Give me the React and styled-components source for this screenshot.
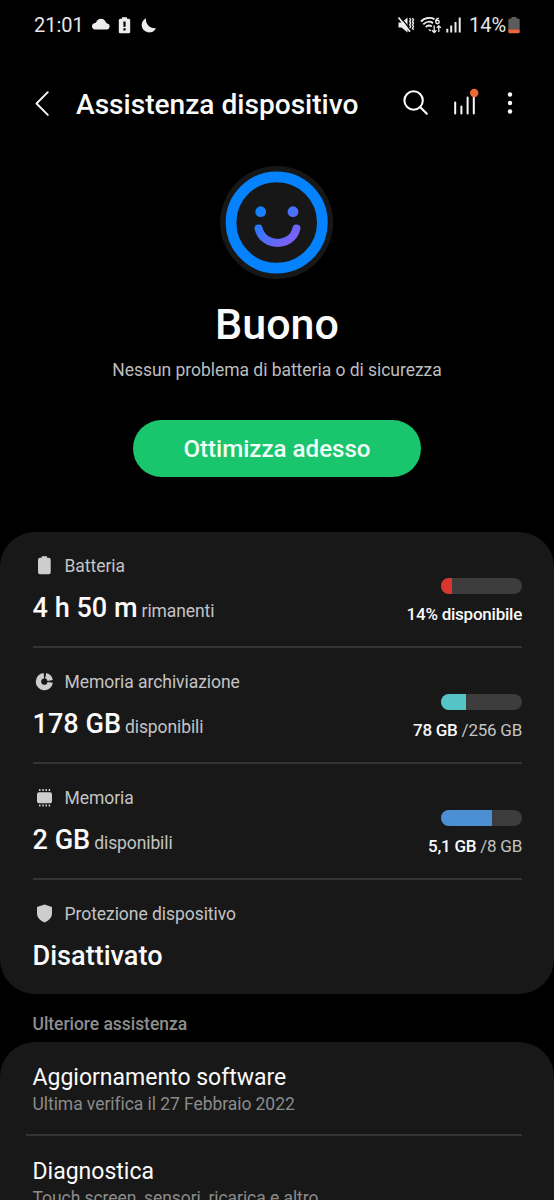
import React from 'react';
import styled, { createGlobalStyle } from 'styled-components';

const GlobalStyle = createGlobalStyle`
    * {
        box-sizing: border-box;
    }
    body {
        margin: 0;
        background: #000;
        font-family: Roboto, "Noto Sans", sans-serif;
        color: #fafafa;
    }
`;

const Screen = styled.div`
    display: flex;
    flex-direction: column;
    width: 554px;
    height: 1200px;
    overflow: hidden;
    background: #000;
`;

const StatusBar = styled.div`
    display: flex;
    justify-content: space-between;
    align-items: center;
    flex: none;
    height: 49px;
    padding: 0 34px 0 34px;
    font-size: 20px;
    color: #e6e6e6;
`;

const StatusGroup = styled.div`
    display: flex;
    align-items: center;

    svg {
        display: block;
    }
`;

const Clock = styled.span`
    width: 57px;
`;

const Percent = styled.span`
    width: 39px;
    margin-left: 6px;
`;

const Header = styled.header`
    display: flex;
    align-items: center;
    flex: none;
    height: 56px;
    margin-top: 27px;
    padding: 0 40px 0 32px;
`;

const IconButton = styled.button`
    display: flex;
    align-items: center;
    justify-content: center;
    width: ${props => props.width}px;
    height: 40px;
    margin-left: ${props => props.gap || 0}px;
    padding: 0;
    border: 0;
    background: none;
`;

const Title = styled.h1`
    flex: 1;
    margin: 1px 0 0 24px;
    font-size: 28.1px;
    font-weight: 500;
    line-height: 36px;
    white-space: nowrap;
`;

const Hero = styled.section`
    display: flex;
    flex-direction: column;
    align-items: center;
    flex: none;
    height: 400px;
    padding-top: 34px;

    svg {
        display: block;
    }
`;

const Status = styled.h2`
    margin: 18px 0 0;
    font-size: 43px;
    font-weight: 500;
    line-height: 52px;
`;

const Subtitle = styled.p`
    margin: 8px 0 0;
    font-size: 17.5px;
    letter-spacing: -0.04px;
    line-height: 24px;
    color: #bdbdbd;
`;

const OptimizeButton = styled.button`
    width: 288px;
    height: 56.5px;
    margin-top: 38px;
    padding: 1px 0 0;
    border: 0;
    border-radius: 29px;
    background: #19c56d;
    color: #f1fff7;
    font-family: inherit;
    font-size: 24.1px;
    font-weight: 500;
`;

const Card = styled.section`
    flex: none;
    padding: 0 32px 0 32.5px;
    border-radius: ${props => props.open ? "35px 35px 0 0" : "35px"};
    background: #181818;
`;

const Row = styled.div`
    display: flex;
    justify-content: space-between;
    height: ${props => props.last ? "113.5px" : "116px"};
    padding-top: 22px;
    border-bottom: ${props => props.last ? "0" : "2px solid #333"};
`;

const Label = styled.div`
    display: flex;
    align-items: center;
    gap: 9px;
    font-size: 17.5px;
    letter-spacing: -0.05px;
    line-height: 24px;
    color: #c4c4c4;
`;

const Value = styled.div`
    margin-top: 12px;
    font-size: 27.1px;
    font-weight: 500;
    line-height: 36px;
    white-space: nowrap;
`;

const Unit = styled.span`
    margin-left: 4px;
    font-size: 17.5px;
    font-weight: 400;
    letter-spacing: -0.1px;
    color: #c4c4c4;
`;

const Usage = styled.div`
    display: flex;
    flex-direction: column;
    align-items: flex-end;
    padding-top: 24px;
`;

const Track = styled.div`
    width: 81px;
    height: 16px;
    border-radius: 8px;
    overflow: hidden;
    background: #3c3c3c;
`;

const Fill = styled.div`
    height: 100%;
    background: ${props => props.color};
`;

const Amount = styled.div`
    margin-top: 8px;
    font-size: 17px;
    letter-spacing: -0.24px;
    line-height: 24px;
    color: #c4c4c4;
    white-space: nowrap;

    b {
        font-weight: 500;
        color: #fafafa;
    }
`;

const SectionLabel = styled.h3`
    flex: none;
    margin: 0;
    padding: 18px 32.5px 6.5px;
    font-size: 17.5px;
    font-weight: 500;
    letter-spacing: -0.05px;
    line-height: 24px;
    color: #8e8e8e;
`;

const ListItem = styled.div`
    padding-top: 22px;
    height: 92px;
`;

const ItemTitle = styled.div`
    font-size: 23px;
    line-height: 28px;
`;

const ItemText = styled.div`
    font-size: 17.5px;
    letter-spacing: -0.06px;
    line-height: 24px;
    color: #8b8b8b;
`;

const Divider = styled.div`
    height: 2px;
    margin-left: -6.5px;
    background: #333;
`;

const StatusIcons = () => (
    <svg width="66" height="20" viewBox="0 0 66 20" fill="#ececec">
        <path d="M4 14.500a3.200 3.200 0 0 1-.6-6.300c.8-.1 1.500-.3 2-1.400a5 5 0 0 1 9.200 0c.3.900.8 1.500 1.800 1.800a3 3 0 0 1-.5 5.900z" />
        <path fillRule="evenodd" d="M31 2.300h5v1.500h1.700a1.500 1.500 0 0 1 1.500 1.500v11.400a1.500 1.500 0 0 1-1.500 1.500h-8.400a1.500 1.500 0 0 1-1.500-1.500V5.300a1.500 1.500 0 0 1 1.500-1.500H31zM32.400 6.500v5.300h2.200V6.500zM32.400 13.300v2.200h2.200v-2.200z" />
        <path d="M55 3.200A7.500 7.500 0 1 0 65 13.200A8.800 8.800 0 0 1 55 3.200z" />
    </svg>
);

const SignalIcons = () => (
    <svg width="66" height="20" viewBox="0 0 66 20" fill="none" stroke="#ececec">
        <path d="M1.500 7.500h3l6-5v15l-6-5h-3z" fill="#ececec" stroke="none" />
        <path d="M3.200 1.800l11 13.500" stroke="#000" strokeWidth="1.300" />
        <path d="M1.500 2.500l11.500 14.200" strokeWidth="1.800" />
        <path d="M12.700 3l1 1.700-1 1.700 1 1.700-1 1.700 1 1.700-1 1.700M15.500 3l1 1.700-1 1.700 1 1.700-1 1.700 1 1.700-1 1.700 1 1.700" strokeWidth="1.400" />
        <path d="M24 6.500c3.500-4 9.500-4.500 13.500-2.300M26.300 9.400c2.800-3 6.700-3.400 9.700-1.300M28.800 12c1.800-1.800 4-2 6-.4" strokeWidth="1.900" />
        <path d="M31 14l2 2.500 1.500-1.500z" fill="#ececec" stroke="none" />
        <path d="M41.800 3.200c-2 .2-3 1.500-3 3.300" strokeWidth="1.400" />
        <circle cx="40.500" cy="7" r="1.700" strokeWidth="1.400" />
        <path d="M37.200 10.500v7M35 15.300l2.200 2.200 2.200-2.200M41.800 17v-6M39.800 12.800l2-2 2 2" strokeWidth="1.300" />
        <path d="M50.300 13.800v3.700M54.200 10.500v7M58.500 7v10.500M62.700 2.500v15" strokeWidth="2" />
    </svg>
);

const LowBattery = () => (
    <svg width="12" height="18" viewBox="0 0 12 18">
        <path d="M3.500 1h5v1.500h1.700a1.500 1.500 0 0 1 1.500 1.500v9H.3V4a1.500 1.500 0 0 1 1.500-1.500h1.700z" fill="#5b5b5b" />
        <path d="M.3 13.300h11.400v2.400a1.500 1.500 0 0 1-1.500 1.500H1.800a1.500 1.500 0 0 1-1.500-1.500z" fill="#e96842" />
    </svg>
);

const BackIcon = () => (
    <svg width="20" height="28" viewBox="0 0 20 28" fill="none" stroke="#fafafa" strokeWidth="1.900" strokeLinecap="round" strokeLinejoin="round">
        <path d="M15.800 2.200L4.500 13.500L15.800 24.800" />
    </svg>
);

const SearchIcon = () => (
    <svg width="28" height="28" viewBox="0 0 28 28" fill="none" stroke="#fafafa" strokeWidth="2.100" strokeLinecap="round">
        <circle cx="11.600" cy="10.500" r="9.200" />
        <path d="M18.300 17.200l6.500 6.500" />
    </svg>
);

const ChartIcon = () => (
    <svg width="28" height="32" viewBox="0 0 28 32" stroke="#fafafa" strokeWidth="2" strokeLinecap="round">
        <path d="M3.200 14.500v11M9.400 18.500v7M15.600 9.500v16M21.800 8v17.500" />
        <circle cx="22.200" cy="5" r="4.200" fill="#ef6a2f" stroke="none" />
    </svg>
);

const MoreIcon = () => (
    <svg width="8" height="28" viewBox="0 0 8 28" fill="#fafafa">
        <circle cx="4" cy="4.500" r="2.200" />
        <circle cx="4" cy="13" r="2.200" />
        <circle cx="4" cy="21.500" r="2.200" />
    </svg>
);

const Smiley = () => (
    <svg width="114" height="114" viewBox="0 0 114 114" fill="none">
        <defs>
            <linearGradient id="face" gradientUnits="userSpaceOnUse" x1="38" y1="42" x2="74" y2="80">
                <stop offset="0" stopColor="#0a84ff" />
                <stop offset="1" stopColor="#8a5cf8" />
            </linearGradient>
        </defs>
        <circle cx="56.700" cy="56.500" r="56.500" fill="#171717" />
        <circle cx="56.700" cy="56.500" r="45.700" stroke="#0583ff" strokeWidth="10.700" />
        <circle cx="40.700" cy="45.700" r="5.400" fill="url(#face)" />
        <circle cx="73" cy="45.700" r="5.400" fill="url(#face)" />
        <path d="M38.600 62.500C43 81.700 72.200 81.700 76.400 62.500" stroke="url(#face)" strokeWidth="8" strokeLinecap="round" />
    </svg>
);

const BatteryIcon = () => (
    <svg width="23" height="24" viewBox="0 0 23 24" fill="#cdcdcd">
        <path d="M8.700 2.300h5.300v1.400h1.700a2 2 0 0 1 2 2v12.600a2 2 0 0 1-2 2H7a2 2 0 0 1-2-2V5.700a2 2 0 0 1 2-2h1.700z" />
    </svg>
);

const StorageIcon = () => (
    <svg width="23" height="24" viewBox="0 0 23 24" fill="none" stroke="#cdcdcd" strokeWidth="5.400">
        <path d="M12.700 5.700a5.900 5.900 0 0 1 4.500 4.800M17.200 12.300a5.900 5.900 0 1 1-6.300-6.600" />
    </svg>
);

const MemoryIcon = () => (
    <svg width="23" height="24" viewBox="0 0 23 24" fill="#cdcdcd" stroke="#cdcdcd">
        <rect x="4" y="6.300" width="15" height="11" rx="2" stroke="none" />
        <path d="M6.800 3v2M10 3v2M13.200 3v2M16.400 3v2M6.800 18.500v2M10 18.500v2M13.200 18.500v2M16.400 18.500v2" strokeWidth="1.500" />
    </svg>
);

const ShieldIcon = () => (
    <svg width="23" height="24" viewBox="0 0 23 24" fill="#cdcdcd">
        <path d="M11.500 2.500l7.500 2.400v6.600c0 4.200-3.500 7.200-7.500 9-4-1.800-7.500-4.800-7.500-9V4.900z" />
    </svg>
);

const stats = [
    { icon: <BatteryIcon />, label: "Batteria", value: "4 h 50 m", unit: "rimanenti", color: "#dc352d", percent: 14, amount: "14% disponibile" },
    { icon: <StorageIcon />, label: "Memoria archiviazione", value: "178 GB", unit: "disponibili", color: "#55c4c6", percent: 31, amount: "78 GB", total: " /256 GB" },
    { icon: <MemoryIcon />, label: "Memoria", value: "2 GB", unit: "disponibili", color: "#4b8fd5", percent: 63, amount: "5,1 GB", total: " /8 GB" },
    { icon: <ShieldIcon />, label: "Protezione dispositivo", value: "Disattivato" },
];

const StatRow = ({ item, last }) => {
    return <Row last={last ? 1 : undefined}>
        <div>
            <Label>{item.icon}{item.label}</Label>
            <Value>{item.value}{item.unit && <Unit>{item.unit}</Unit>}</Value>
        </div>
        {item.amount && <Usage>
            <Track>
                <Fill color={item.color} style={{ width: `${item.percent}%` }} />
            </Track>
            <Amount><b>{item.amount}</b>{item.total}</Amount>
        </Usage>}
    </Row>
}

const App = () => {
    return <>
        <GlobalStyle />
        <Screen>
            <StatusBar>
                <StatusGroup>
                    <Clock>21:01</Clock>
                    <StatusIcons />
                </StatusGroup>
                <StatusGroup>
                    <SignalIcons />
                    <Percent>14%</Percent>
                    <LowBattery />
                </StatusGroup>
            </StatusBar>
            <Header>
                <IconButton width={20} aria-label="Indietro"><BackIcon /></IconButton>
                <Title>Assistenza dispositivo</Title>
                <IconButton width={28} aria-label="Cerca"><SearchIcon /></IconButton>
                <IconButton width={28} gap={22} aria-label="Grafico"><ChartIcon /></IconButton>
                <IconButton width={8} gap={26} aria-label="Altro"><MoreIcon /></IconButton>
            </Header>
            <Hero>
                <Smiley />
                <Status>Buono</Status>
                <Subtitle>Nessun problema di batteria o di sicurezza</Subtitle>
                <OptimizeButton>Ottimizza adesso</OptimizeButton>
            </Hero>
            <Card>
                {stats.map((item, i) => <StatRow key={item.label} item={item} last={i === stats.length - 1} />)}
            </Card>
            <SectionLabel>Ulteriore assistenza</SectionLabel>
            <Card open>
                <ListItem>
                    <ItemTitle>Aggiornamento software</ItemTitle>
                    <ItemText>Ultima verifica il 27 Febbraio 2022</ItemText>
                </ListItem>
                <Divider />
                <ListItem>
                    <ItemTitle>Diagnostica</ItemTitle>
                    <ItemText>Touch screen, sensori, ricarica e altro</ItemText>
                </ListItem>
            </Card>
        </Screen>
    </>
}


export default App;
